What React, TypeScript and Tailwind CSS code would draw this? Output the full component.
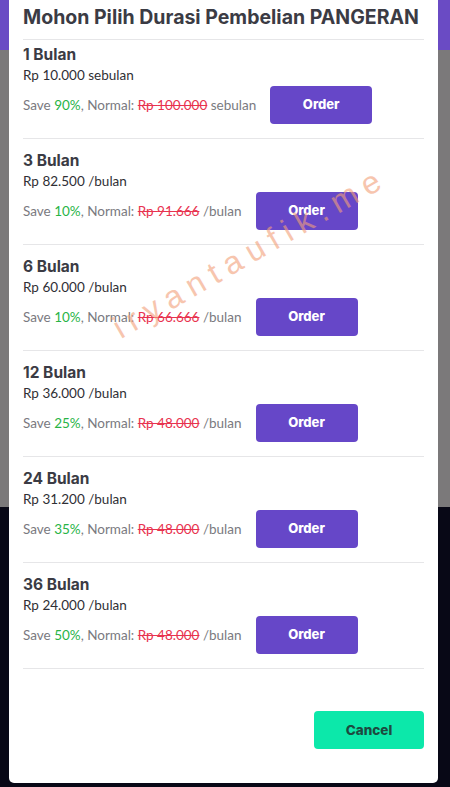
import React from 'react';

interface Plan {
  months: number;
  price: string;
  unit: string;
  save: string;
  normal: string;
}

const plans: Plan[] = [
  { months: 1, price: '10.000', unit: 'sebulan', save: '90%', normal: '100.000' },
  { months: 3, price: '82.500', unit: '/bulan', save: '10%', normal: '91.666' },
  { months: 6, price: '60.000', unit: '/bulan', save: '10%', normal: '66.666' },
  { months: 12, price: '36.000', unit: '/bulan', save: '25%', normal: '48.000' },
  { months: 24, price: '31.200', unit: '/bulan', save: '35%', normal: '48.000' },
  { months: 36, price: '24.000', unit: '/bulan', save: '50%', normal: '48.000' },
];

const heading = { fontFamily: 'Inter, "Noto Sans", sans-serif' };
const body = { fontFamily: 'Lato, "Open Sans", sans-serif' };

const PlanRow: React.FC<{ plan: Plan; first?: boolean }> = ({ plan, first }) => {
  const unit = plan.unit === 'sebulan' ? ' sebulan' : ' /bulan';
  return (
    <div className={`mx-[14px] border-b border-[#e6e6e8] pb-[14px] ${first ? 'pt-[5px]' : 'pt-[12px]'}`}>
      <div style={heading} className="text-[15.5px] leading-[20px] font-bold text-[#3b3b44]">
        {plan.months} Bulan
      </div>
      <div style={body} className="text-[13.5px] leading-[20px] text-[#2f2f35]">
        Rp {plan.price}
        {unit}
      </div>
      <div className="mt-[1px] flex items-center">
        <span style={body} className="text-[13.5px] text-[#7a7a80]">
          Save <span className="text-[#28b446]">{plan.save}</span>, Normal:{' '}
          <span className="text-[#e8334f] line-through">Rp {plan.normal}</span>
          {unit}
        </span>
        <button
          style={heading}
          className="ml-[14px] h-[38px] w-[102px] rounded-[4px] bg-[#6647c8] text-[13px] font-extrabold text-white"
        >
          Order
        </button>
      </div>
    </div>
  );
};

export default function App() {
  return (
    <div className="relative h-[787px] w-[450px] overflow-hidden">
      {/* page behind the dimmed overlay */}
      <div className="flex h-full flex-col">
        <div className="h-[50px] bg-[#6a4bc4]" />
        <div className="h-[457px] bg-[#7b797a]" />
        <div className="flex-1 bg-[#080816]" />
      </div>

      {/* modal */}
      <div className="absolute left-[9px] top-0 h-[783px] w-[429px] rounded-b-[5px] bg-white">
        <div className="mx-[14px] border-b border-[#e6e6e8] pt-[5px] pb-[9px]">
          <h2 style={heading} className="whitespace-nowrap text-[19.5px] leading-[25px] font-bold text-[#3b3b44]">
            Mohon Pilih Durasi Pembelian PANGERAN
          </h2>
        </div>
        {plans.map((p, i) => (
          <PlanRow key={p.months} plan={p} first={i === 0} />
        ))}
        <div className="mx-[14px] mt-[42px] flex justify-end">
          <button
            style={heading}
            className="h-[38px] w-[110px] rounded-[4px] bg-[#0ce8aa] text-[13.5px] font-extrabold text-[#1d4a40]"
          >
            Cancel
          </button>
        </div>

        {/* watermark */}
        <div
          style={{ fontFamily: '"Liberation Sans", Arial, sans-serif' }}
          className="pointer-events-none absolute left-[241px] top-[252px] -translate-x-1/2 -translate-y-1/2 -rotate-[30deg] whitespace-nowrap text-[32px] tracking-[8px] text-[#f2a07a] opacity-60"
        >
          iryantaufik.me
        </div>
      </div>
    </div>
  );
}
